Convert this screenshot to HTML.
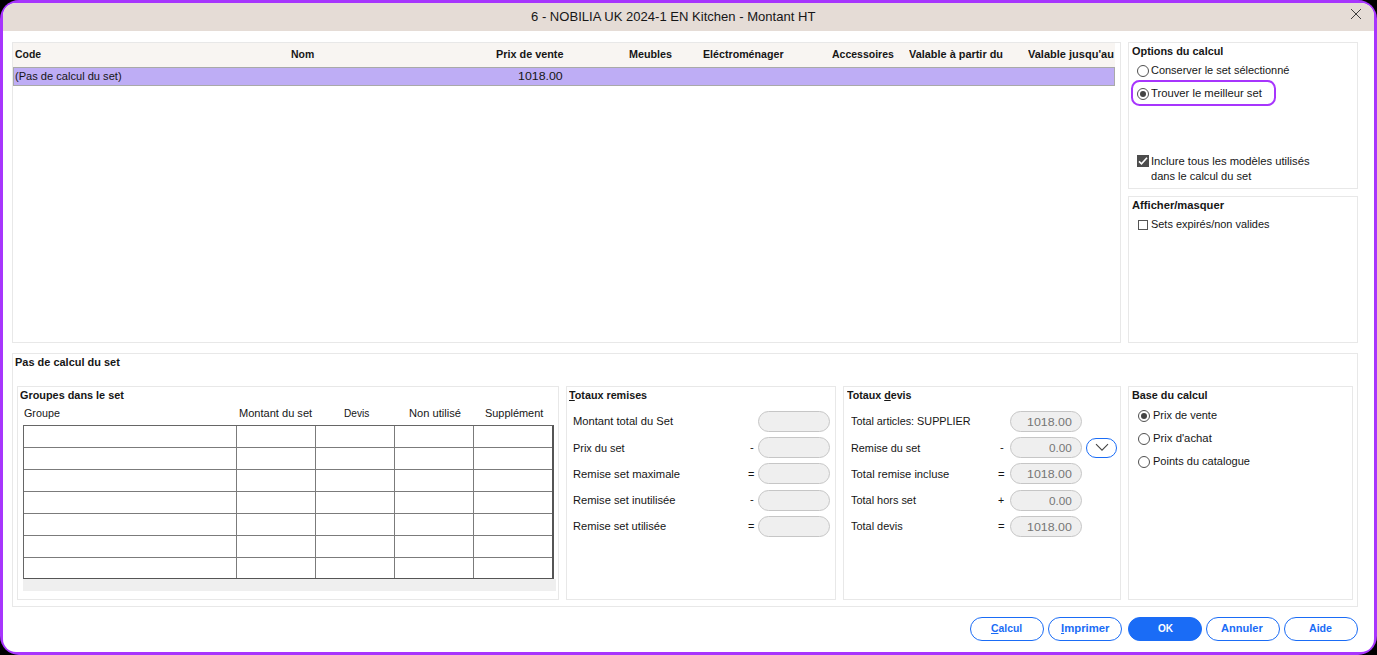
<!DOCTYPE html>
<html><head><meta charset="utf-8"><title>Montant HT</title>
<style>

html,body{margin:0;padding:0;background:#000;}
body{width:1377px;height:655px;position:relative;overflow:hidden;font-family:'Liberation Sans', sans-serif;}
.win{position:absolute;left:0;top:0;width:1377px;height:655px;border-radius:19px;background:#a735fd;overflow:hidden;}
.inn{position:absolute;left:3px;top:3px;width:1371px;height:649px;border-radius:13px;background:#fff;overflow:hidden;}
.tb{position:absolute;left:0;top:0;width:1371px;height:28px;background:#e5dcd6;}
.a{position:absolute;}
.box{position:absolute;border:1px solid #e8e8e8;box-sizing:border-box;background:#fff;}
.t{position:absolute;white-space:pre;transform-origin:0 0;line-height:normal;}
.pill{position:absolute;box-sizing:border-box;width:72px;height:21px;border:1px solid #c6c6c6;border-radius:11px;background:#efefef;}
.btn{position:absolute;box-sizing:border-box;top:617px;width:74px;height:24px;border:1px solid #1a6cf6;border-radius:12px;background:#fff;}
.rad{position:absolute;box-sizing:border-box;width:12px;height:12px;border:1px solid #505050;border-radius:50%;background:#fff;}
.rad.on::after{content:"";position:absolute;left:2px;top:2px;width:6px;height:6px;border-radius:50%;background:#444;}
u{text-decoration:underline;}

</style></head><body>
<div class="win"><div class="inn"><div class="tb"></div></div></div>
<svg class="a" style="left:1350px;top:8px" width="12" height="12" viewBox="0 0 12 12"><path d="M1 1 L11 11 M11 1 L1 11" stroke="#2a2a2a" stroke-width="0.9" fill="none"/></svg>
<div class="box" style="left:12px;top:42px;width:1109px;height:301px"></div>
<div class="a" style="left:13px;top:43px;width:1102px;height:24px;background:#f8f5f2"></div>
<div class="a" style="left:13px;top:67px;width:1102px;height:19px;background:#beadf5;box-sizing:border-box;border:1px solid #a9a9a9"></div>
<div class="box" style="left:1128px;top:42px;width:230px;height:147px"></div>
<div class="box" style="left:1128px;top:196px;width:230px;height:147px"></div>
<div class="a" style="left:1131.4px;top:80.3px;width:144.4px;height:25.4px;box-sizing:border-box;border:2.3px solid #a735fd;border-radius:8.5px"></div>
<div class="rad" style="left:1137px;top:65px"></div>
<div class="rad on" style="left:1137px;top:88px"></div>
<svg class="a" style="left:1137px;top:155px" width="12" height="12" viewBox="0 0 12 12"><rect width="12" height="12" fill="#4d4d4d"/><path d="M2 6.4 L4.5 8.9 L10 2.8" stroke="#fff" stroke-width="1.6" fill="none"/></svg>
<div class="a" style="left:1138px;top:220px;width:10px;height:10px;box-sizing:border-box;border:1px solid #555;background:#fff"></div>
<div class="box" style="left:12px;top:353px;width:1346px;height:254px"></div>
<div class="box" style="left:17px;top:386px;width:542px;height:214px"></div>
<div class="box" style="left:566px;top:386px;width:270px;height:214px"></div>
<div class="box" style="left:843px;top:386px;width:278px;height:214px"></div>
<div class="box" style="left:1128px;top:386px;width:225px;height:214px"></div>
<div class="a" style="left:23px;top:579px;width:533px;height:12px;background:#efefef"></div>
<div class="a" style="left:23px;top:425px;width:531px;height:154px;box-sizing:border-box;border:1px solid #666;border-right:2px solid #555;border-bottom:1px solid #555;background:#fff"></div>
<div class="a" style="left:24px;top:447px;width:528px;height:1px;background:#7b7b7b"></div>
<div class="a" style="left:24px;top:469px;width:528px;height:1px;background:#7b7b7b"></div>
<div class="a" style="left:24px;top:491px;width:528px;height:1px;background:#7b7b7b"></div>
<div class="a" style="left:24px;top:513px;width:528px;height:1px;background:#7b7b7b"></div>
<div class="a" style="left:24px;top:535px;width:528px;height:1px;background:#7b7b7b"></div>
<div class="a" style="left:24px;top:557px;width:528px;height:1px;background:#7b7b7b"></div>
<div class="a" style="left:236px;top:426px;width:1px;height:152px;background:#7b7b7b"></div>
<div class="a" style="left:315px;top:426px;width:1px;height:152px;background:#7b7b7b"></div>
<div class="a" style="left:394px;top:426px;width:1px;height:152px;background:#7b7b7b"></div>
<div class="a" style="left:473px;top:426px;width:1px;height:152px;background:#7b7b7b"></div>
<div class="pill" style="left:758px;top:411px"></div>
<div class="pill" style="left:1010px;top:411px"></div>
<div class="pill" style="left:758px;top:437px"></div>
<div class="pill" style="left:1010px;top:437px"></div>
<div class="pill" style="left:758px;top:463px"></div>
<div class="pill" style="left:1010px;top:463px"></div>
<div class="pill" style="left:758px;top:490px"></div>
<div class="pill" style="left:1010px;top:490px"></div>
<div class="pill" style="left:758px;top:516px"></div>
<div class="pill" style="left:1010px;top:516px"></div>
<div class="a" style="left:1086px;top:438px;width:31px;height:20px;box-sizing:border-box;border:1px solid #1a6cf6;border-radius:10px;background:#fff"></div>
<svg class="a" style="left:1094.5px;top:443.3px" width="14" height="9" viewBox="0 0 14 9"><path d="M1 1.2 L7 7.2 L13 1.2" stroke="#444" stroke-width="1.1" fill="none"/></svg>
<div class="rad on" style="left:1138px;top:410px"></div>
<div class="rad" style="left:1138px;top:433px"></div>
<div class="rad" style="left:1138px;top:456px"></div>
<div class="btn" style="left:970px;"></div>
<div class="btn" style="left:1048px;"></div>
<div class="btn" style="left:1128px;background:#1a6cf6"></div>
<div class="btn" style="left:1206px;"></div>
<div class="btn" style="left:1284px;"></div>
<div class="t" style="left:531.3px;top:9.0px;font-size:13.3px;color:#161616;transform:scaleX(0.9817);">6 - NOBILIA UK 2024-1 EN Kitchen - Montant HT</div>
<div class="t" style="left:15.4px;top:48.0px;font-size:11.5px;color:#161616;font-weight:bold;transform:scaleX(0.9078);">Code</div>
<div class="t" style="left:291.2px;top:48.0px;font-size:11.5px;color:#161616;font-weight:bold;transform:scaleX(0.9076);">Nom</div>
<div class="t" style="left:495.6px;top:48.0px;font-size:11.5px;color:#161616;font-weight:bold;transform:scaleX(0.9428);">Prix de vente</div>
<div class="t" style="left:629.4px;top:48.0px;font-size:11.5px;color:#161616;font-weight:bold;transform:scaleX(0.9366);">Meubles</div>
<div class="t" style="left:702.5px;top:48.0px;font-size:11.5px;color:#161616;font-weight:bold;transform:scaleX(0.9271);">Eléctroménager</div>
<div class="t" style="left:831.6px;top:48.0px;font-size:11.5px;color:#161616;font-weight:bold;transform:scaleX(0.9118);">Accessoires</div>
<div class="t" style="left:909.4px;top:48.0px;font-size:11.5px;color:#161616;font-weight:bold;transform:scaleX(0.9487);">Valable à partir du</div>
<div class="t" style="left:1027.5px;top:48.0px;font-size:11.5px;color:#161616;font-weight:bold;transform:scaleX(0.9581);">Valable jusqu&#x27;au</div>
<div class="t" style="left:14.9px;top:70.0px;font-size:11.5px;color:#161616;transform:scaleX(0.9639);">(Pas de calcul du set)</div>
<div class="t" style="left:518.4px;top:70.0px;font-size:11.5px;color:#161616;transform:scaleX(1.0751);">1018.00</div>
<div class="t" style="left:1131.6px;top:45.0px;font-size:11.5px;color:#161616;font-weight:bold;transform:scaleX(0.9473);">Options du calcul</div>
<div class="t" style="left:1151.4px;top:64.0px;font-size:11.5px;color:#161616;transform:scaleX(0.9538);">Conserver le set sélectionné</div>
<div class="t" style="left:1151.0px;top:87.0px;font-size:11.5px;color:#161616;transform:scaleX(0.9776);">Trouver le meilleur set</div>
<div class="t" style="left:1151.4px;top:155.0px;font-size:11.5px;color:#161616;transform:scaleX(0.9768);">Inclure tous les modèles utilisés</div>
<div class="t" style="left:1151.4px;top:170.0px;font-size:11.5px;color:#161616;transform:scaleX(0.9616);">dans le calcul du set</div>
<div class="t" style="left:1131.6px;top:199.0px;font-size:11.5px;color:#161616;font-weight:bold;transform:scaleX(0.9726);">Afficher/masquer</div>
<div class="t" style="left:1151.4px;top:218.0px;font-size:11.5px;color:#161616;transform:scaleX(0.9506);">Sets expirés/non valides</div>
<div class="t" style="left:15.0px;top:356.0px;font-size:11.5px;color:#161616;font-weight:bold;transform:scaleX(0.9533);">Pas de calcul du set</div>
<div class="t" style="left:20.3px;top:389.0px;font-size:11.5px;color:#161616;font-weight:bold;transform:scaleX(0.9451);">Groupes dans le set</div>
<div class="t" style="left:24.4px;top:407.0px;font-size:11.5px;color:#161616;transform:scaleX(0.9359);">Groupe</div>
<div class="t" style="left:238.6px;top:407.0px;font-size:11.5px;color:#161616;transform:scaleX(0.9609);">Montant du set</div>
<div class="t" style="left:343.7px;top:407.0px;font-size:11.5px;color:#161616;transform:scaleX(0.8795);">Devis</div>
<div class="t" style="left:408.5px;top:407.0px;font-size:11.5px;color:#161616;transform:scaleX(0.9664);">Non utilisé</div>
<div class="t" style="left:485.4px;top:407.0px;font-size:11.5px;color:#161616;transform:scaleX(0.9499);">Supplément</div>
<div class="t" style="left:569.4px;top:389.0px;font-size:11.5px;color:#161616;font-weight:bold;transform:scaleX(0.9352);"><u>T</u>otaux remises</div>
<div class="t" style="left:573.4px;top:415.0px;font-size:11.5px;color:#161616;transform:scaleX(0.9715);">Montant total du Set</div>
<div class="t" style="left:573.4px;top:442.0px;font-size:11.5px;color:#161616;transform:scaleX(0.9498);">Prix du set</div>
<div class="t" style="left:573.4px;top:468.0px;font-size:11.5px;color:#161616;transform:scaleX(0.9743);">Remise set maximale</div>
<div class="t" style="left:573.4px;top:494.0px;font-size:11.5px;color:#161616;transform:scaleX(0.9719);">Remise set inutilisée</div>
<div class="t" style="left:573.4px;top:520.0px;font-size:11.5px;color:#161616;transform:scaleX(0.9656);">Remise set utilisée</div>
<div class="t" style="left:749.5px;top:441.0px;font-size:11.5px;color:#161616;transform:scaleX(0.9886);">-</div>
<div class="t" style="left:748.2px;top:468.0px;font-size:11.5px;color:#161616;transform:scaleX(0.9526);">=</div>
<div class="t" style="left:749.5px;top:493.0px;font-size:11.5px;color:#161616;transform:scaleX(0.9886);">-</div>
<div class="t" style="left:748.2px;top:520.0px;font-size:11.5px;color:#161616;transform:scaleX(0.9526);">=</div>
<div class="t" style="left:846.6px;top:389.0px;font-size:11.5px;color:#161616;font-weight:bold;transform:scaleX(0.9287);">Totaux <u>d</u>evis</div>
<div class="t" style="left:851.4px;top:415.0px;font-size:11.5px;color:#161616;transform:scaleX(0.9403);">Total articles: SUPPLIER</div>
<div class="t" style="left:851.4px;top:442.0px;font-size:11.5px;color:#161616;transform:scaleX(0.9427);">Remise du set</div>
<div class="t" style="left:851.4px;top:468.0px;font-size:11.5px;color:#161616;transform:scaleX(0.9724);">Total remise incluse</div>
<div class="t" style="left:851.4px;top:494.0px;font-size:11.5px;color:#161616;transform:scaleX(0.9502);">Total hors set</div>
<div class="t" style="left:851.4px;top:520.0px;font-size:11.5px;color:#161616;transform:scaleX(0.9495);">Total devis</div>
<div class="t" style="left:999.5px;top:441.0px;font-size:11.5px;color:#161616;transform:scaleX(0.9886);">-</div>
<div class="t" style="left:998.0px;top:468.0px;font-size:11.5px;color:#161616;transform:scaleX(0.9823);">=</div>
<div class="t" style="left:998.3px;top:494.0px;font-size:11.5px;color:#161616;transform:scaleX(0.9228);">+</div>
<div class="t" style="left:998.0px;top:520.0px;font-size:11.5px;color:#161616;transform:scaleX(0.9823);">=</div>
<div class="t" style="left:1026.6px;top:416.0px;font-size:11.5px;color:#767676;transform:scaleX(1.0775);">1018.00</div>
<div class="t" style="left:1048.5px;top:442.0px;font-size:11.5px;color:#767676;transform:scaleX(1.0227);">0.00</div>
<div class="t" style="left:1026.6px;top:468.0px;font-size:11.5px;color:#767676;transform:scaleX(1.0775);">1018.00</div>
<div class="t" style="left:1048.5px;top:495.0px;font-size:11.5px;color:#767676;transform:scaleX(1.0227);">0.00</div>
<div class="t" style="left:1026.6px;top:521.0px;font-size:11.5px;color:#767676;transform:scaleX(1.0775);">1018.00</div>
<div class="t" style="left:1131.6px;top:389.0px;font-size:11.5px;color:#161616;font-weight:bold;transform:scaleX(0.9386);">Base du calcul</div>
<div class="t" style="left:1152.7px;top:409.0px;font-size:11.5px;color:#161616;transform:scaleX(0.9534);">Prix de vente</div>
<div class="t" style="left:1152.7px;top:432.0px;font-size:11.5px;color:#161616;transform:scaleX(0.9844);">Prix d&#x27;achat</div>
<div class="t" style="left:1152.7px;top:455.0px;font-size:11.5px;color:#161616;transform:scaleX(0.9601);">Points du catalogue</div>
<div class="t" style="left:990.9px;top:622.0px;font-size:11.5px;color:#1a6cf6;font-weight:bold;transform:scaleX(0.9010);"><u>C</u>alcul</div>
<div class="t" style="left:1060.5px;top:622.0px;font-size:11.5px;color:#1a6cf6;font-weight:bold;transform:scaleX(0.9854);"><u>I</u>mprimer</div>
<div class="t" style="left:1157.5px;top:622.0px;font-size:11.5px;color:#ffffff;font-weight:bold;transform:scaleX(0.8754);">OK</div>
<div class="t" style="left:1221.4px;top:622.0px;font-size:11.5px;color:#1a6cf6;font-weight:bold;transform:scaleX(0.9597);">Annuler</div>
<div class="t" style="left:1308.9px;top:622.0px;font-size:11.5px;color:#1a6cf6;font-weight:bold;transform:scaleX(0.9229);">Aide</div>
</body></html>
